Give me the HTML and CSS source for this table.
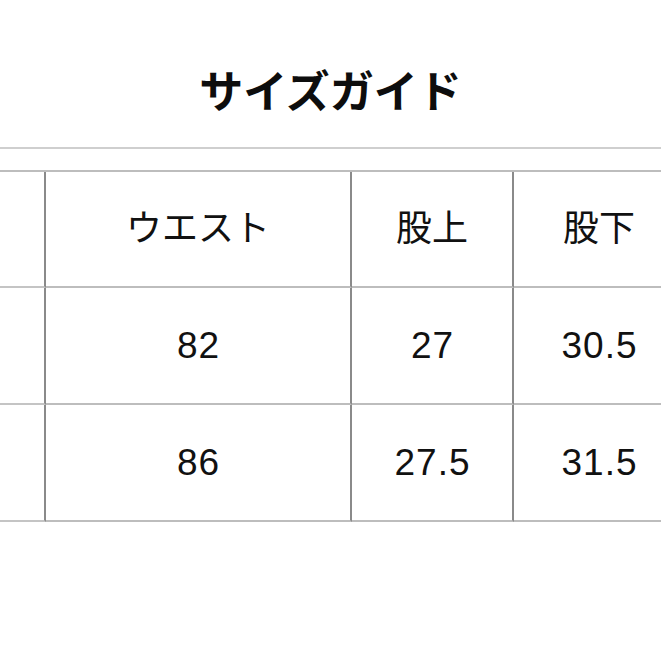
FILE: index.html
```html
<!DOCTYPE html>
<html lang="ja">
<head>
<meta charset="utf-8">
<link rel="stylesheet" href="styles.css">
</head>
<body>
<div class="page">
  <header class="title-bar">
    <h1 class="title">サイズガイド</h1>
  </header>
  <div class="table-wrap">
    <div class="grid">
      <div class="cell c0"></div>
      <div class="cell">ウエスト</div>
      <div class="cell">股上</div>
      <div class="cell">股下</div>

      <div class="cell c0"></div>
      <div class="cell num">82</div>
      <div class="cell num">27</div>
      <div class="cell num">30.5</div>

      <div class="cell c0"></div>
      <div class="cell num">86</div>
      <div class="cell num">27.5</div>
      <div class="cell num">31.5</div>
    </div>
  </div>
</div>
</body>
</html>
```
FILE: styles.css
```css
html, body {
  margin: 0;
  padding: 0;
  background: #ffffff;
}
body {
  font-family: "Liberation Sans", "Noto Sans CJK JP", sans-serif;
  color: #111111;
}
.page {
  width: 661px;
  height: 661px;
  overflow: hidden;
}
.title-bar {
  height: 149px;
  box-sizing: border-box;
  padding-top: 67px;
  border-bottom: 2px solid #cfcfcf;
  display: flex;
  justify-content: center;
}
.title {
  margin: 0;
  font-family: "Noto Sans CJK JP", sans-serif;
  font-weight: 700;
  font-size: 44px;
  line-height: 44px;
  color: #0d0d0d;
}
.table-wrap {
  margin-top: 21px;
  width: 661px;
  overflow: hidden;
}
.grid {
  display: grid;
  grid-template-columns: 46px 306px 162px 172px;
  grid-template-rows: 116px 117px 117px;
  width: 686px;
  border-top: 2px solid #bdbdbd;
}
.cell {
  box-sizing: border-box;
  border-bottom: 2px solid #bdbdbd;
  border-right: 2px solid #8a8a8a;
  display: flex;
  align-items: center;
  justify-content: center;
  font-size: 36px;
  line-height: 1;
}
.num {
  font-size: 37px;
  letter-spacing: 1px;
  padding-left: 1px;
}
.c0 {
  border-bottom-color: #c4c4c4;
}
```
